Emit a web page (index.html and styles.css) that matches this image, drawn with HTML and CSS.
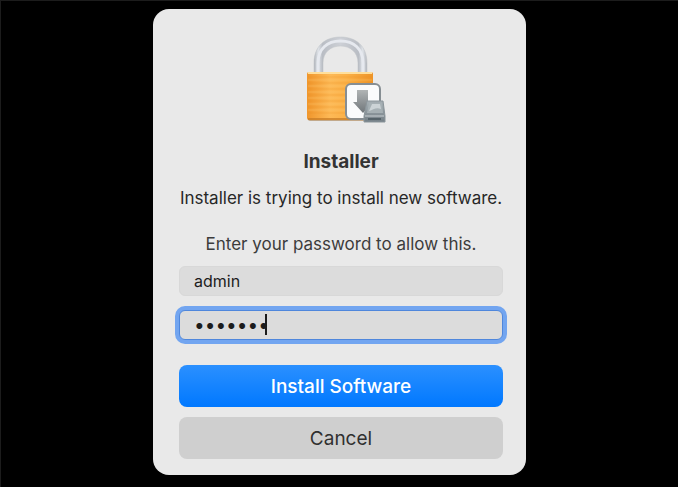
FILE: index.html
```
<!DOCTYPE html>
<html lang="en">
<head>
    <meta charset="UTF-8">
    <meta name="viewport" content="width=device-width, initial-scale=1.0">
    <title>Installer</title>
    <link rel="stylesheet" href="styles.css">
</head>
<body>
    <form class="dialog">
        <svg class="lock" width="90" height="90" viewBox="-10 0 90 90" aria-hidden="true">
            <defs>
                <linearGradient id="steel" x1="0" y1="0" x2="1" y2="0">
                    <stop offset="0" stop-color="#b2b6bc"/>
                    <stop offset="0.08" stop-color="#dfe3e8"/>
                    <stop offset="0.16" stop-color="#b9bdc4"/>
                    <stop offset="0.5" stop-color="#cdd0d6"/>
                    <stop offset="0.84" stop-color="#b9bdc4"/>
                    <stop offset="0.92" stop-color="#dfe3e8"/>
                    <stop offset="1" stop-color="#b2b6bc"/>
                </linearGradient>
                <linearGradient id="brass" x1="0" y1="0" x2="1" y2="0">
                    <stop offset="0" stop-color="#f0962c"/>
                    <stop offset="0.35" stop-color="#fdb956"/>
                    <stop offset="0.6" stop-color="#fbb046"/>
                    <stop offset="1" stop-color="#ee9427"/>
                </linearGradient>
                <linearGradient id="arrow" x1="0" y1="0" x2="0" y2="1">
                    <stop offset="0" stop-color="#b0b4b5"/>
                    <stop offset="1" stop-color="#70767a"/>
                </linearGradient>
                <linearGradient id="drive" x1="0" y1="0" x2="0" y2="1">
                    <stop offset="0" stop-color="#a7b0b5"/>
                    <stop offset="1" stop-color="#747f86"/>
                </linearGradient>
            </defs>
            <!-- shackle -->
            <path d="M8 37V27C8 10 19 1 34.500 1S61 10 61 27V37H52V27C52 16 44 10 34.500 10S17 16 17 27V37Z" fill="url(#steel)" stroke="#bfc2c7" stroke-width="0.500"/>
            <path d="M12 37V27C12 13 21 5 34.500 5S57 13 57 27V37" fill="none" stroke="#e6e9ef" stroke-width="3"/>
            <!-- body -->
            <rect x="2" y="37" width="65" height="48" rx="2" fill="#9b6a2d" opacity="0.5"/>
            <rect x="1" y="36" width="66" height="48" rx="2" fill="url(#brass)"/>
            <path d="M2 41H66M2 47H66M2 53H66M2 59H66M2 65H66M2 71H66M2 77H66" stroke="#e98b1c" stroke-width="1" opacity="0.25"/>
            <path d="M2 44H66M2 50H66M2 56H66M2 62H66M2 68H66M2 74H66" stroke="#ffcf78" stroke-width="1" opacity="0.35"/>
            <path d="M2 37H66" stroke="#ffdf9b" stroke-width="2"/>
            <path d="M2 83H66" stroke="#c97d26" stroke-width="1.500"/>
            <!-- installer badge -->
            <rect x="40" y="48" width="34" height="35" rx="5" fill="#fafbfc" stroke="#868e93" stroke-width="2"/>
            <path d="M51 54H62V66H67L57 77L47 66H51Z" fill="url(#arrow)"/>
            <!-- drive -->
            <path d="M61 65H77L79 80V86H58V80Z" fill="url(#drive)" stroke="#8b959a" stroke-width="1"/>
            <path d="M63 67H76L77 77H61Z" fill="#a6b0b4"/>
            <path d="M66 68H74L75 73C70 71 67 74 63 75Z" fill="#ccd3d6"/>
            <path d="M59 80H78" stroke="#c9d0d3" stroke-width="1"/>
            <path d="M62 83H75" stroke="#56636a" stroke-width="2"/>
        </svg>
        <h1>Installer</h1>
        <p class="message">Installer is trying to install new software.</p>
        <p class="hint">Enter your password to allow this.</p>
        <div class="fields">
            <input class="field" type="text" value="admin" aria-label="User name">
            <div class="password">
                <input class="field focused" type="password" value="1234567" aria-label="Password">
                <span class="caret"></span>
            </div>
        </div>
        <div class="buttons">
            <button class="btn primary" type="submit">Install Software</button>
            <button class="btn" type="button">Cancel</button>
        </div>
    </form>
</body>
</html>
```

FILE: styles.css
```
* {
    box-sizing: border-box;
}
body {
    margin: 0;
    min-height: 100vh;
    padding: 8px;
    display: flex;
    align-items: flex-start;
    justify-content: center;
    background: #000;
    border-top: 1px solid #1c1c1c;
    border-left: 1px solid #1c1c1c;
    font-family: Inter, "Liberation Sans", sans-serif;
    color: #272727;
}
.dialog {
    width: 100%;
    max-width: 373px;
    padding: 27px 23px 16px 26px;
    background: #e9e9e9;
    border-radius: 16px;
    display: flex;
    flex-direction: column;
    align-items: center;
}
.lock {
    display: block;
}
h1 {
    margin: 24px 0 0;
    font-size: 19px;
    line-height: 24px;
    font-weight: 700;
    color: #333;
}
p {
    margin: 0;
    font-size: 17px;
    line-height: 22px;
    white-space: nowrap;
}
.message {
    margin-top: 13px;
}
.hint {
    margin-top: 24px;
    color: #3c3c3c;
}
.fields {
    width: 100%;
    margin-top: 11px;
    display: grid;
    gap: 14px;
}
.field {
    display: block;
    width: 100%;
    height: 30px;
    padding: 0 14px;
    border: 1px solid #d8d8d8;
    border-radius: 6px;
    background: #dcdcdc;
    font: inherit;
    font-size: 16px;
    color: #1c1c1c;
    outline: none;
}
.password {
    position: relative;
}
.focused {
    border: 1px solid #4f87dc;
    box-shadow: 0 0 0 4px #72a5f0;
    font-size: 19px;
}
.caret {
    position: absolute;
    left: 86px;
    top: 4px;
    width: 2px;
    height: 21px;
    background: #1c1c1c;
}
.buttons {
    width: 100%;
    margin-top: 25px;
    display: grid;
    gap: 10px;
}
.btn {
    height: 42px;
    padding: 0;
    border: 0;
    border-radius: 8px;
    background: #cfcfcf;
    font: inherit;
    font-size: 19px;
    color: #303030;
}
.primary {
    background: linear-gradient(#2b90ff, #0078ff);
    color: #fff;
    font-weight: 500;
}
```
